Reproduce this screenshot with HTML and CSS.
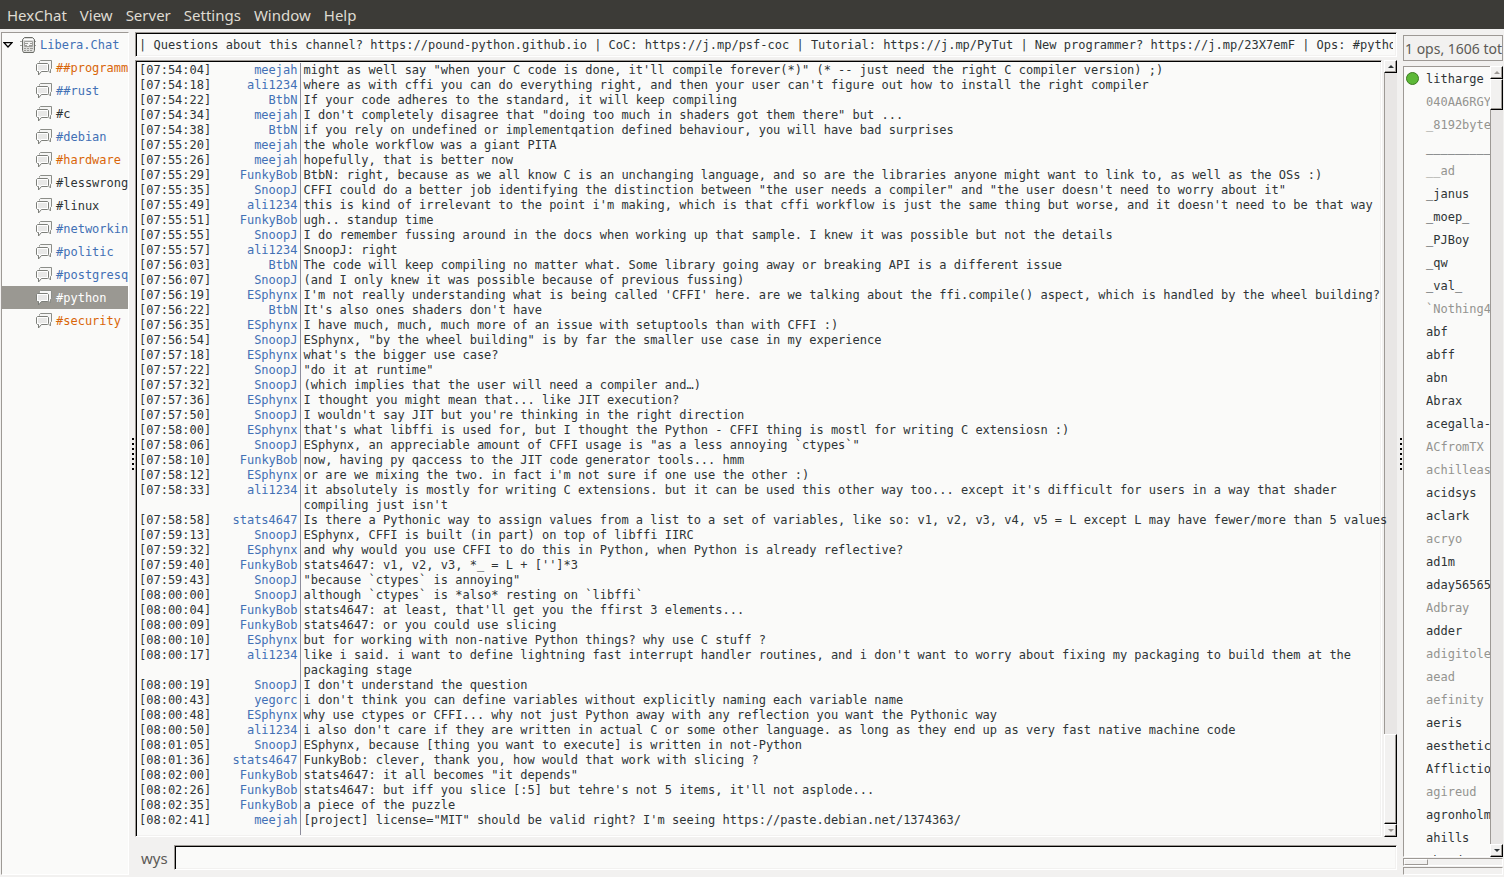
FILE: index.html
```
<!DOCTYPE html>
<html lang="en">
<head>
  <meta charset="utf-8">
  <title>HexChat</title>
  <link rel="stylesheet" href="styles.css">
</head>
<body>
  <svg class="sprites" width="0" height="0" aria-hidden="true">
    <symbol id="icon-channel" viewBox="0 0 16 16">
      <path d="M3.500 2.500v-1l1-1h11v8l-1 1v3.500l-2-2" fill="#f6f6f5" stroke="#8b8d88"/>
      <path d="M1.500 3.500h10l1 1v6l-1 1h-6l-3 3.500v-3.500h-1l-1-1v-6z" fill="#e8e8e7" stroke="#7d7f7a"/>
      <path d="M1.500 10.500v-6h10v6h-6.500l-1.500 2v-2z" fill="none" stroke="#fff"/>
    </symbol>
    <symbol id="icon-server" viewBox="0 0 16 16">
      <path d="M4.500 .5h8l2 2v11l-1 2h-10l-1-2v-11z" fill="#dcdcda" stroke="#6b6d68"/>
      <path d="M4 2.500h9" stroke="#fff"/>
      <path d="M4.500 4.500h8v5h-8z" fill="#f2f2f1" stroke="#a2a29e"/>
      <path d="M5 6.500h3M10 6.500h2M5 8.500h2M9 8.500h3M4 11.500h2M7 11.500h2M10 11.500h3M4 13.500h2M7 13.500h2M10 13.500h2" stroke="#9a9a96"/>
      <path d="M0 4.500h2M0 8.500h2M15 4.500h1M15 8.500h1" stroke="#a2a29e"/>
    </symbol>
  </svg>

  <nav class="menubar">
    <button>HexChat</button>
    <button>View</button>
    <button>Server</button>
    <button>Settings</button>
    <button>Window</button>
    <button>Help</button>
  </nav>

  <div class="window">
    <aside class="tree">
      <button class="tree-server"><svg class="expander" viewBox="0 0 10 6"><path d="M1 .7h8L5 5z" fill="#fff" stroke="#000" stroke-width="1.300"/></svg><svg class="icon"><use href="#icon-server"/></svg>Libera.Chat</button>
      <ul id="channels"></ul>
    </aside>

    <div class="handle"></div>

    <main class="chat">
      <input class="topic" aria-label="Topic" value="| Questions about this channel? https://pound-python.github.io | CoC: https://j.mp/psf-coc | Tutorial: https://j.mp/PyTut | New programmer? https://j.mp/23X7emF | Ops: #python-ops">
      <div class="scrollback">
        <div class="log">
          <table>
            <tbody id="messages"></tbody>
          </table>
        </div>
        <div class="scrollbar">
          <button class="step up" aria-label="Scroll up"></button>
          <div class="trough"><div class="thumb log-thumb"></div></div>
          <button class="step down off" aria-label="Scroll down"></button>
        </div>
      </div>
      <div class="entry">
        <label for="say">wys</label>
        <input id="say" type="text">
      </div>
    </main>

    <div class="handle"></div>

    <aside class="users">
      <div class="count">1 ops, 1606 total</div>
      <div class="userlist">
        <ul id="nicks"></ul>
        <div class="scrollbar">
          <button class="step up off" aria-label="Scroll up"></button>
          <div class="trough"><div class="thumb nick-thumb"></div></div>
          <button class="step down" aria-label="Scroll down"></button>
        </div>
      </div>
      <div class="meter"><div class="meter-fill"></div></div>
      <div class="meter"></div>
    </aside>
  </div>

  <script src="data.js"></script>
</body>
</html>
```
FILE: styles.css
```
*,
*::before {
  box-sizing: border-box;
}

body {
  margin: 0;
  height: 100vh;
  display: flex;
  flex-direction: column;
  overflow: hidden;
  background: #f2f1f0;
  color: #2e3436;
  font: 12px/15px "DejaVu Sans Mono", monospace;
}

button,
input {
  font: inherit;
  color: inherit;
  border: 0;
  border-radius: 0;
  margin: 0;
  padding: 0;
  background: none;
  outline: 0;
}

ul {
  list-style: none;
  margin: 0;
  padding: 0;
}

a {
  color: inherit;
  text-decoration: none;
}

.sprites {
  position: absolute;
}

.menubar {
  display: flex;
  flex: none;
  gap: 13px;
  height: 29px;
  padding: 2px 7px 0;
  background: #3c3b37;
  color: #dfdbd2;
  font: 15px/27px "Noto Sans", sans-serif;
}

.window {
  flex: 1;
  min-height: 0;
  display: flex;
  padding: 3px 1px 2px;
}

/* channel tree */
.tree {
  flex: none;
  width: 128px;
  overflow: hidden;
  background: #fafaf9;
  border: 1px solid #9d9995;
  border-right-color: #fff;
  border-bottom-color: #fff;
}

.tree button {
  display: flex;
  align-items: center;
  gap: 4px;
  width: 100%;
  height: 23px;
  padding-top: 1px;
  white-space: nowrap;
}

.tree .tree-server {
  padding-left: 1px;
  color: #4270b5;
}

.expander {
  flex: none;
  width: 10px;
  height: 6px;
  margin-right: 3px;
}

.icon {
  flex: none;
  width: 16px;
  height: 16px;
}

#channels button {
  padding-left: 34px;
}

#channels .said {
  color: #4270b5;
}

#channels .hilight {
  color: #d9660a;
}

#channels .current {
  background: #9a9892;
  color: #fff;
}

.handle {
  flex: none;
  display: flex;
  align-items: center;
  justify-content: flex-end;
  width: 6px;
  padding-right: 1px;
}

.handle::before {
  content: "";
  width: 2px;
  height: 32px;
  background: repeating-linear-gradient(#000 0 2px, transparent 2px 5px);
}

/* chat */
.chat {
  flex: 1;
  min-width: 0;
  display: flex;
  flex-direction: column;
}

.topic,
.log,
.entry input {
  background: #fafaf9;
  border: 1px solid #9d9995;
  border-right-color: #fff;
  border-bottom-color: #fff;
  box-shadow: inset 1px 1px #000, inset -1px -1px #f2f1f0;
}

.topic {
  flex: none;
  width: 100%;
  height: 25px;
  padding: 0 3px;
}

.scrollback {
  flex: 1;
  min-height: 0;
  display: flex;
  gap: 2px;
  margin: 3px 0 8px;
}

.log {
  flex: 1;
  min-width: 0;
  z-index: 1;
  padding: 2px 0 1px 3px;
}

.log table {
  width: 100%;
  height: 100%;
  border-collapse: collapse;
  table-layout: fixed;
}

.log tr {
  height: 15px;
}

.log tr:last-child {
  height: auto;
}

.log td {
  padding: 0;
  vertical-align: top;
  white-space: pre;
}

.log .time {
  width: 73px;
}

.log .nick {
  width: 88px;
  padding-right: 2px;
  border-right: 1px solid #8d8d9c;
  text-align: right;
  color: #4270b5;
}

.log .text {
  padding-left: 3px;
}

.entry {
  flex: none;
  display: flex;
  gap: 6px;
  padding: 0 0 5px 6px;
}

.entry label {
  padding-top: 1px;
  color: #5c5a56;
  font: 15px/24px "Noto Sans", sans-serif;
}

.entry input {
  flex: 1;
  min-width: 0;
  height: 25px;
  padding: 0 5px;
}

/* scrollbars */
.scrollbar {
  flex: none;
  width: 13px;
  display: flex;
  flex-direction: column;
}

.step,
.thumb {
  background: #f2f1f0;
  border: 1px solid #fff;
  border-right-color: #000;
  border-bottom-color: #000;
  box-shadow: inset -1px -1px #9d9995;
}

.step {
  flex: none;
  display: flex;
  align-items: center;
  justify-content: center;
  height: 13px;
}

.step::before {
  content: "";
  border: 3px solid transparent;
  border-top-width: 0;
  border-bottom-color: #2e3436;
}

.step.down::before {
  border-width: 3px 3px 0;
  border-top-color: #2e3436;
}

.step.off::before {
  border-top-color: #9d9995;
  border-bottom-color: #9d9995;
}

.trough {
  flex: 1;
  display: flex;
  flex-direction: column;
  background: #e8e6e5;
  border-left: 1px solid #9d9995;
}

.log-thumb {
  height: 12%;
  margin-top: auto;
}

.nick-thumb {
  height: 4%;
}

.thumb {
  margin-left: -1px;
}

/* user list */
.users {
  flex: none;
  width: 100px;
  display: flex;
  flex-direction: column;
  padding-top: 3px;
}

.count {
  flex: none;
  height: 26px;
  padding-left: 1px;
  overflow: hidden;
  border: 1px solid #9d9995;
  white-space: nowrap;
  color: #5c5a56;
  font: 14px/26px "Noto Sans", sans-serif;
}

.userlist {
  flex: 1;
  min-height: 0;
  display: flex;
  margin-top: 5px;
}

#nicks {
  flex: 1;
  min-width: 0;
  overflow: hidden;
  background: #fafaf9;
  border: 1px solid #9d9995;
  border-right: 0;
  border-bottom-color: #fff;
}

#nicks li {
  height: 23px;
  padding: 1px 0 0 22px;
  line-height: 22px;
  white-space: nowrap;
}

#nicks .away {
  color: #949490;
}

#nicks .op {
  display: flex;
  align-items: center;
  gap: 7px;
  padding: 0 0 0 2px;
}

.op::before {
  content: "";
  width: 13px;
  height: 13px;
  border: 1px solid #3c7a22;
  border-radius: 50%;
  background: #5cb837;
}

.meter {
  flex: none;
  height: 8px;
  margin-top: 1px;
  border: 1px solid #9d9995;
  border-right-color: #fff;
  border-bottom-color: #fff;
}

.meter-fill {
  width: 24px;
  height: 6px;
  border: 1px solid #fff;
  border-right-color: #9d9995;
  border-bottom-color: #9d9995;
}
```
FILE: data.js
```
const channels = [
  ["##programming", "hilight"],
  ["##rust", "said"],
  ["#c", ""],
  ["#debian", "said"],
  ["#hardware", "hilight"],
  ["#lesswrong", ""],
  ["#linux", ""],
  ["#networking", "said"],
  ["#politic", "said"],
  ["#postgresql", "said"],
  ["#python", "current"],
  ["#security", "hilight"]
];

const messages = [
  ["07:54:04", "meejah", "might as well say \"when your C code is done, it'll compile forever(*)\" (* -- just need the right C compiler version) ;)"],
  ["07:54:18", "ali1234", "where as with cffi you can do everything right, and then your user can't figure out how to install the right compiler"],
  ["07:54:22", "BtbN", "If your code adheres to the standard, it will keep compiling"],
  ["07:54:34", "meejah", "I don't completely disagree that \"doing too much in shaders got them there\" but ..."],
  ["07:54:38", "BtbN", "if you rely on undefined or implementqation defined behaviour, you will have bad surprises"],
  ["07:55:20", "meejah", "the whole workflow was a giant PITA"],
  ["07:55:26", "meejah", "hopefully, that is better now"],
  ["07:55:29", "FunkyBob", "BtbN: right, because as we all know C is an unchanging language, and so are the libraries anyone might want to link to, as well as the OSs :)"],
  ["07:55:35", "SnoopJ", "CFFI could do a better job identifying the distinction between \"the user needs a compiler\" and \"the user doesn't need to worry about it\""],
  ["07:55:49", "ali1234", "this is kind of irrelevant to the point i'm making, which is that cffi workflow is just the same thing but worse, and it doesn't need to be that way"],
  ["07:55:51", "FunkyBob", "ugh.. standup time"],
  ["07:55:55", "SnoopJ", "I do remember fussing around in the docs when working up that sample. I knew it was possible but not the details"],
  ["07:55:57", "ali1234", "SnoopJ: right"],
  ["07:56:03", "BtbN", "The code will keep compiling no matter what. Some library going away or breaking API is a different issue"],
  ["07:56:07", "SnoopJ", "(and I only knew it was possible because of previous fussing)"],
  ["07:56:19", "ESphynx", "I'm not really understanding what is being called 'CFFI' here. are we talking about the ffi.compile() aspect, which is handled by the wheel building?"],
  ["07:56:22", "BtbN", "It's also ones shaders don't have"],
  ["07:56:35", "ESphynx", "I have much, much, much more of an issue with setuptools than with CFFI :)"],
  ["07:56:54", "SnoopJ", "ESphynx, \"by the wheel building\" is by far the smaller use case in my experience"],
  ["07:57:18", "ESphynx", "what's the bigger use case?"],
  ["07:57:22", "SnoopJ", "\"do it at runtime\""],
  ["07:57:32", "SnoopJ", "(which implies that the user will need a compiler and…)"],
  ["07:57:36", "ESphynx", "I thought you might mean that... like JIT execution?"],
  ["07:57:50", "SnoopJ", "I wouldn't say JIT but you're thinking in the right direction"],
  ["07:58:00", "ESphynx", "that's what libffi is used for, but I thought the Python - CFFI thing is mostl for writing C extensiosn :)"],
  ["07:58:06", "SnoopJ", "ESphynx, an appreciable amount of CFFI usage is \"as a less annoying `ctypes`\""],
  ["07:58:10", "FunkyBob", "now, having py qaccess to the JIT code generator tools... hmm"],
  ["07:58:12", "ESphynx", "or are we mixing the two. in fact i'm not sure if one use the other :)"],
  ["07:58:33", "ali1234", "it absolutely is mostly for writing C extensions. but it can be used this other way too... except it's difficult for users in a way that shader\ncompiling just isn't"],
  ["07:58:58", "stats4647", "Is there a Pythonic way to assign values from a list to a set of variables, like so: v1, v2, v3, v4, v5 = L except L may have fewer/more than 5 values"],
  ["07:59:13", "SnoopJ", "ESphynx, CFFI is built (in part) on top of libffi IIRC"],
  ["07:59:32", "ESphynx", "and why would you use CFFI to do this in Python, when Python is already reflective?"],
  ["07:59:40", "FunkyBob", "stats4647: v1, v2, v3, *_ = L + ['']*3"],
  ["07:59:43", "SnoopJ", "\"because `ctypes` is annoying\""],
  ["08:00:00", "SnoopJ", "although `ctypes` is *also* resting on `libffi`"],
  ["08:00:04", "FunkyBob", "stats4647: at least, that'll get you the ffirst 3 elements..."],
  ["08:00:09", "FunkyBob", "stats4647: or you could use slicing"],
  ["08:00:10", "ESphynx", "but for working with non-native Python things? why use C stuff ?"],
  ["08:00:17", "ali1234", "like i said. i want to define lightning fast interrupt handler routines, and i don't want to worry about fixing my packaging to build them at the\npackaging stage"],
  ["08:00:19", "SnoopJ", "I don't understand the question"],
  ["08:00:43", "yegorc", "i don't think you can define variables without explicitly naming each variable name"],
  ["08:00:48", "ESphynx", "why use ctypes or CFFI... why not just Python away with any reflection you want the Pythonic way"],
  ["08:00:50", "ali1234", "i also don't care if they are written in actual C or some other language. as long as they end up as very fast native machine code"],
  ["08:01:05", "SnoopJ", "ESphynx, because [thing you want to execute] is written in not-Python"],
  ["08:01:36", "stats4647", "FunkyBob: clever, thank you, how would that work with slicing ?"],
  ["08:02:00", "FunkyBob", "stats4647: it all becomes \"it depends\""],
  ["08:02:26", "FunkyBob", "stats4647: but iff you slice [:5] but tehre's not 5 items, it'll not asplode..."],
  ["08:02:35", "FunkyBob", "a piece of the puzzle"],
  ["08:02:41", "meejah", "[project] license=\"MIT\" should be valid right? I'm seeing <a href=\"https://paste.debian.net/1374363/\">https://paste.debian.net/1374363/</a>"],
  // empty last row carries the divider down to the bottom edge
  ["", "", ""]
];

// second field is the row class: op, away or nothing
const nicks = [
  ["litharge", "op"], ["040AA6RGY", "away"], ["_8192bytes", "away"], ["__________", ""],
  ["__ad", "away"], ["_janus", ""], ["_moep_", ""], ["_PJBoy", ""], ["_qw", ""], ["_val_", ""],
  ["`Nothing4", "away"], ["abf", ""], ["abff", ""], ["abn", ""], ["Abrax", ""], ["acegalla-", ""],
  ["ACfromTX", "away"], ["achilleas", "away"], ["acidsys", ""], ["aclark", ""], ["acryo", "away"],
  ["ad1m", ""], ["aday56565", ""], ["Adbray", "away"], ["adder", ""], ["adigitole", "away"],
  ["aead", "away"], ["aefinity", "away"], ["aeris", ""], ["aesthetic", ""], ["Afflictio", ""],
  ["agireud", "away"], ["agronholm", ""], ["ahills", ""], ["ahmed", ""]
];

document.getElementById("channels").innerHTML = channels
  .map(([name, state]) => `<li><button class="${state}"><svg class="icon"><use href="#icon-channel"/></svg>${name}</button></li>`)
  .join("");

document.getElementById("messages").innerHTML = messages
  .map(([time, nick, text]) => `<tr><td class="time">${time && `[${time}]`}</td><td class="nick">${nick}</td><td class="text">${text}</td></tr>`)
  .join("");

document.getElementById("nicks").innerHTML = nicks
  .map(([name, state]) => `<li class="${state}">${name}</li>`)
  .join("");
```
